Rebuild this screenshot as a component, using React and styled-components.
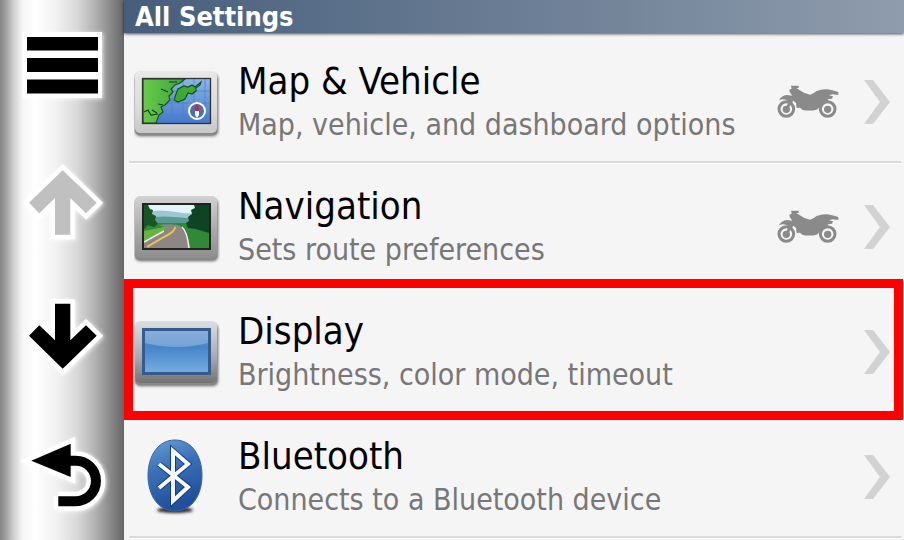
import React from "react";
import styled, { createGlobalStyle } from "styled-components";

const GlobalStyle = createGlobalStyle`
  * {
    box-sizing: border-box;
  }
  body {
    margin: 0;
    background: #f5f5f5;
    font-family: "DejaVu Sans Condensed", "DejaVu Sans", sans-serif;
  }
`;

const Screen = styled.div`
  display: grid;
  grid-template-columns: 124px 1fr;
  min-height: 100vh;
`;

const Sidebar = styled.nav`
  display: grid;
  grid-auto-rows: 1fr;
  background: linear-gradient(
    to right,
    #858585 0%,
    #9c9c9c 4%,
    #cfcfcf 11%,
    #f6f6f6 18%,
    #ffffff 28%,
    #f2f2f2 45%,
    #d9d9d9 62%,
    #b4b4b4 76%,
    #8a8a8a 89%,
    #666666 100%
  );
`;

const SideButton = styled.button`
  display: flex;
  align-items: center;
  justify-content: center;
  padding: 0;
  border: 0;
  background: none;
  color: ${({ disabled }) => (disabled ? "#c0c0c0" : "#000")};
  cursor: pointer;

  svg {
    filter: drop-shadow(1px 1px 2px rgba(255, 255, 255, 0.8));
  }
`;

const Main = styled.main`
  display: flex;
  flex-direction: column;
  min-width: 0;
`;

const Header = styled.header`
  padding: 0 11px;
  background: linear-gradient(to right, #465e7b, #8f9cad);
  box-shadow: 0 1px 3px rgba(0, 0, 0, 0.7);
`;

const Heading = styled.h1`
  margin: 0;
  color: #fff;
  font-size: 27px;
  line-height: 33px;
`;

const List = styled.ul`
  margin: 0;
  padding: 5px 0 0;
  list-style: none;
`;

const Item = styled.li`
  position: relative;
  padding: 0 3px 0 5px;

  ${({ $highlighted }) =>
    $highlighted &&
    `
    &::after {
      content: "";
      position: absolute;
      inset: -9px 1px -7px 0;
      border: 9px solid #f00;
      pointer-events: none;
    }
  `}
`;

const RowButton = styled.button`
  display: grid;
  grid-template-columns: 86px 1fr 62px 28px;
  align-items: center;
  column-gap: 18px;
  width: 100%;
  height: 125px;
  padding: 4px 10px 0 5px;
  border: 0;
  border-bottom: 2px solid #dadada;
  background: none;
  box-shadow: 0 1px 0 #fff;
  font-family: inherit;
  text-align: left;
  cursor: pointer;
`;

const Labels = styled.span`
  display: flex;
  flex-direction: column;
  padding-top: 2px;
  white-space: nowrap;
`;

const Title = styled.span`
  color: #000;
  font-size: 38px;
  line-height: 44px;
`;

const Subtitle = styled.span`
  color: #777;
  font-size: 30px;
  line-height: 44px;
`;

const Vehicle = styled.span`
  display: flex;
  justify-content: center;
  margin: 0 6px 0 -6px;
`;

const Halo = { stroke: "#fff", strokeWidth: 9, paintOrder: "stroke" };

function MenuIcon() {
  return (
    <svg width="124" height="135" aria-hidden="true">
      <path d="M23 32H102V98H23Z" fill="#fff" />
      <path d="M27 37H98V50.5H27ZM27 58H98V72H27ZM27 79.5H98V93.5H27Z" fill="currentColor" />
    </svg>
  );
}

function UpIcon() {
  return (
    <svg width="124" height="135" aria-hidden="true">
      <path
        d="M62.7 35.3L96.7 67.7L86 78.3L70.3 63V99.7H55V63L39.3 78.3L29 67.7Z"
        fill="currentColor"
        {...Halo}
      />
    </svg>
  );
}

function DownIcon() {
  return (
    <svg width="124" height="135" aria-hidden="true">
      <path
        d="M55 33.7H70.3V70.3L86 55.3L96.7 65.7L62.7 98.7L29 65.7L39.3 55.3L55 70.3Z"
        fill="currentColor"
        {...Halo}
      />
    </svg>
  );
}

function BackIcon() {
  const hook = "M70 55.7H75.7A20.2 20.2 0 0 1 75.7 96.2H58.3";
  return (
    <svg width="124" height="135" aria-hidden="true">
      <path d={hook} fill="none" stroke="#fff" strokeWidth="19" />
      <path d="M54 91V105H62V91Z" fill="#fff" />
      <path d="M31.3 55.7L70.7 38.7V72Z" fill="currentColor" {...Halo} />
      <path d={hook} fill="none" stroke="currentColor" strokeWidth="10" />
    </svg>
  );
}

// Shared bezel of the three screen-shaped icons
function Device({ id, top, middle, bottom, children }) {
  return (
    <svg width="86" height="82" viewBox="0 -6 86 82" aria-hidden="true">
      <defs>
        <linearGradient id={`${id}-bezel`} x1="0" y1="0" x2="0" y2="1">
          <stop offset="0" stopColor={top} />
          <stop offset="0.6" stopColor={middle} />
          <stop offset="1" stopColor={bottom} />
        </linearGradient>
        <filter id={`${id}-shadow`} x="-10%" y="-10%" width="120%" height="125%">
          <feGaussianBlur stdDeviation="1.5" />
        </filter>
      </defs>
      <rect x="1" y="7" width="83" height="62" rx="5" fill="#333" opacity="0.75" filter={`url(#${id}-shadow)`} />
      <rect x="1" y="5" width="82" height="63" rx="5" fill="#888" />
      <rect x="1" y="4" width="82" height="62" rx="5" fill={`url(#${id}-bezel)`} />
      {children}
    </svg>
  );
}

function MapIcon() {
  return (
    <Device id="map" top="#e8e8e8" middle="#dcdcdc" bottom="#c8c8c8">
      <defs>
        <linearGradient id="sea" x1="0" y1="0" x2="0" y2="1">
          <stop offset="0" stopColor="#8bb6e8" />
          <stop offset="1" stopColor="#4478cc" />
        </linearGradient>
        <linearGradient id="land" x1="0" y1="0" x2="1" y2="0">
          <stop offset="0" stopColor="#67cb48" />
          <stop offset="1" stopColor="#3da33a" />
        </linearGradient>
      </defs>
      <rect x="8.5" y="11.5" width="68" height="45" fill="url(#sea)" />
      <path d="M27 12V56M38 12V56M49 12V56M60 12V56M71 12V56M9 24H76M9 36H76M9 48H76" stroke="#4a7fca" strokeWidth="0.7" />
      <path
        d="M9 12H51L46 16L41 18L37 22L39 25L35 29L36 33L31 38L27 40L29 45L25 48L22 56H9Z"
        fill="url(#land)"
        stroke="#14521d"
        strokeWidth="1.2"
      />
      <path d="M35 15H43M27 22L34 25M24 37L29 38M10 45L14 43L17 48L24 47M18 43L23 46" fill="none" stroke="#143d17" strokeWidth="1.2" />
      <path
        d="M42 27L44 22L50 19L54 20L58 18L61 20L67 15L66 18L62 21V24L58 27L54 26L51 32L44 35L40 33Z"
        fill="#3eaa34"
        stroke="#14521d"
        strokeWidth="1.2"
      />
      <circle cx="63" cy="44" r="8" fill="#4a6fb5" stroke="#fff" strokeWidth="2" />
      <path d="M61 45V40L63 37L65 40V45Z" fill="#c7283b" />
      <path d="M61 44H65V48L63 51L61 48Z" fill="#fff" />
      <rect x="8.5" y="11.5" width="68" height="45" fill="none" stroke="#333" strokeWidth="1.3" />
    </Device>
  );
}

function RoadIcon() {
  return (
    <Device id="road" top="#d2d2d2" middle="#a6a6a6" bottom="#8e8e8e">
      <rect x="8" y="11" width="69" height="47" fill="#222" />
      <svg x="10" y="13" width="65" height="43" viewBox="0 0 65 43">
        <rect width="65" height="43" fill="#e3f3fa" />
        <path d="M0 7Q16 4 32 7T65 7V24H0Z" fill="#9cc6d2" />
        <path d="M0 13Q20 10 42 13L65 12V25H0Z" fill="#5a9a94" />
        <path d="M0 18H65V43H0Z" fill="#2f8936" />
        <path d="M0 26L20 22L28 21L0 37Z" fill="#68b340" />
        <path d="M0 43V38L20 26Q25 22 14 20Q30 18 36 21Q44 25 46 43Z" fill="#8c8784" />
        <path d="M0 37L20 26M38 22Q43 26 45 43" fill="none" stroke="#f2f2ed" strokeWidth="1.5" />
        <path d="M3 42L20 32Q32 26 31 22" fill="none" stroke="#edc44c" strokeWidth="2" />
        <path d="M0 0H4L6 4L9 5L8 9L12 11L11 15L14 19L10 22L4 20L0 24Z" fill="#175525" />
        <path d="M65 0H50L51 3L47 5L48 9L44 12L45 16L42 18L44 23L52 24L65 28Z" fill="#0e4422" />
      </svg>
    </Device>
  );
}

function DisplayIcon() {
  return (
    <Device id="display" top="#dce0e4" middle="#a2a9b1" bottom="#737373">
      <defs>
        <linearGradient id="glass" x1="0" y1="0" x2="0" y2="1">
          <stop offset="0" stopColor="#6a9cd3" />
          <stop offset="0.4" stopColor="#4585c8" />
          <stop offset="1" stopColor="#75aee2" />
        </linearGradient>
      </defs>
      <rect x="9.5" y="12.5" width="66" height="44" fill="url(#glass)" stroke="#375c8c" strokeWidth="3" />
      <path d="M11 14H74V26Q42 34 11 26Z" fill="#b9cdec" opacity="0.4" />
    </Device>
  );
}

function BluetoothIcon() {
  const rune = "M25 28L54 51L39 65V15L54 28L25 52";
  return (
    <svg width="86" height="82" viewBox="0 0 86 82" aria-hidden="true">
      <defs>
        <linearGradient id="bt" x1="0" y1="0" x2="0.3" y2="1">
          <stop offset="0" stopColor="#6b9fd4" />
          <stop offset="0.45" stopColor="#3b70b8" />
          <stop offset="1" stopColor="#1f4f9d" />
        </linearGradient>
        <filter id="bt-shadow" x="-20%" y="-50%" width="140%" height="200%">
          <feGaussianBlur stdDeviation="1.5" />
        </filter>
      </defs>
      <ellipse cx="41" cy="74" rx="18" ry="3" fill="#222" filter="url(#bt-shadow)" />
      <path d="M41 4C58 4 68 20 68 39.5S58 75 41 75S14 59 14 39.5S24 4 41 4Z" fill="url(#bt)" stroke="#3766a4" />
      <path d={rune} fill="none" stroke="#173d79" strokeWidth="6" />
      <path d={rune} fill="none" stroke="#f6f8fc" strokeWidth="4" />
    </svg>
  );
}

function MotorcycleIcon() {
  return (
    <svg width="62" height="34" viewBox="39 74 186 102" role="img" aria-label="Motorcycle">
      <g fill="none" stroke="#8a8a8a">
        <circle cx="67" cy="146" r="22" strokeWidth="9" />
        <circle cx="191" cy="146" r="22" strokeWidth="9" />
      </g>
      <g fill="#8a8a8a">
        <circle cx="67" cy="147" r="11" />
        <circle cx="191" cy="147" r="11" />
        <path d="M81 76H104V83H97L110 91Q122 101 139 103Q150 98 158 92Q172 86 190 87Q209 90 223 95V104L206 102L195 105L207 108L204 115L191 117L196 127L188 126L179 128L170 137L158 148Q137 153 116 149L108 142L98 143L96 128L88 121L70 149L64 145L75 123Q58 113 45 120Q51 106 69 104L85 106L77 95L76 88L83 85Z" />
      </g>
    </svg>
  );
}

function Chevron() {
  return (
    <svg width="28" height="44" viewBox="0 0 28 44" aria-hidden="true">
      <path d="M1 0H10L27 22L10 44H1L17 22Z" fill="#d2d2d2" />
    </svg>
  );
}

const controls = [
  { label: "Menu", Icon: MenuIcon },
  { label: "Scroll up", Icon: UpIcon, disabled: true },
  { label: "Scroll down", Icon: DownIcon },
  { label: "Back", Icon: BackIcon },
];

const settings = [
  { title: "Map & Vehicle", subtitle: "Map, vehicle, and dashboard options", Icon: MapIcon, vehicle: true },
  { title: "Navigation", subtitle: "Sets route preferences", Icon: RoadIcon, vehicle: true },
  { title: "Display", subtitle: "Brightness, color mode, timeout", Icon: DisplayIcon, highlighted: true },
  { title: "Bluetooth", subtitle: "Connects to a Bluetooth device", Icon: BluetoothIcon },
];

function App() {
  return (
    <Screen>
      <GlobalStyle />
      <Sidebar>
        {controls.map(({ label, Icon, disabled }) => (
          <SideButton key={label} type="button" aria-label={label} disabled={disabled}>
            <Icon />
          </SideButton>
        ))}
      </Sidebar>

      <Main>
        <Header>
          <Heading>All Settings</Heading>
        </Header>
        <List>
          {settings.map(({ title, subtitle, Icon, vehicle, highlighted }) => (
            <Item key={title} $highlighted={highlighted}>
              <RowButton type="button">
                <Icon />
                <Labels>
                  <Title>{title}</Title>
                  <Subtitle>{subtitle}</Subtitle>
                </Labels>
                <Vehicle>{vehicle && <MotorcycleIcon />}</Vehicle>
                <Chevron />
              </RowButton>
            </Item>
          ))}
        </List>
      </Main>
    </Screen>
  );
}

export default App;
